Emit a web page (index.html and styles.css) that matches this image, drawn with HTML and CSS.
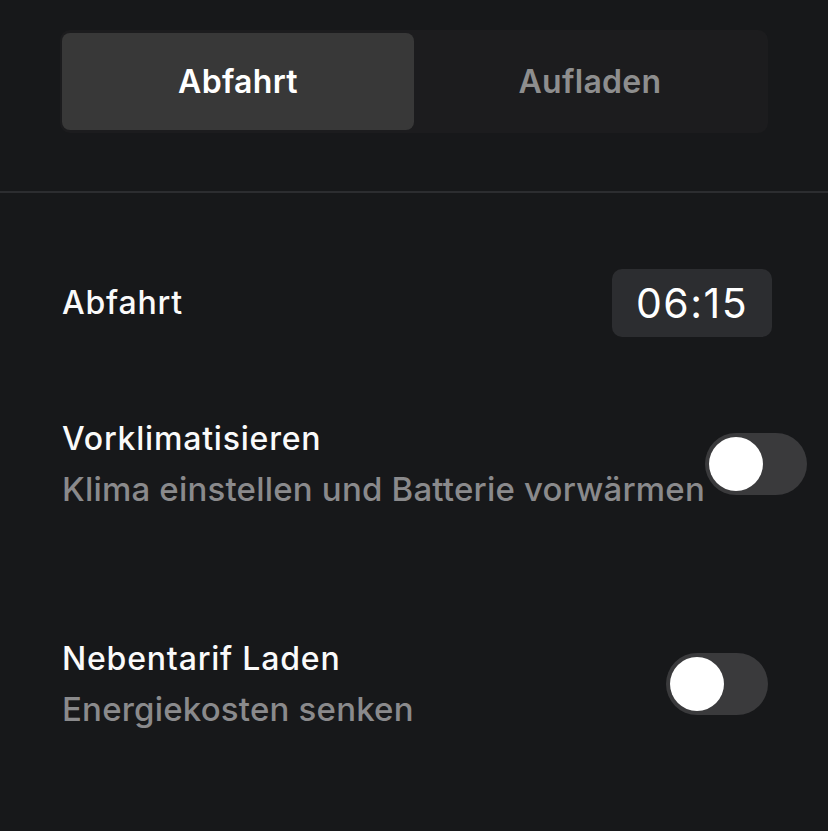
FILE: index.html
```html
<!DOCTYPE html>
<html lang="de">
<head>
  <meta charset="UTF-8" />
  <meta name="viewport" content="width=device-width, initial-scale=1.0"/>
  <title>Abfahrt</title>
  <link rel="stylesheet" href="styles.css">
</head>
<body>

  <div class="tabs">
    <button class="tab active">Abfahrt</button>
    <button class="tab">Aufladen</button>
  </div>

  <hr class="divider">

  <div class="settings">
    <div class="row row-time">
      <div class="label">Abfahrt</div>
      <div class="time-box">06:15</div>
    </div>

    <div class="row row-climate">
      <div class="text">
        <div class="label">Vorklimatisieren</div>
        <div class="sub">Klima einstellen und Batterie vorwärmen</div>
      </div>
      <div class="toggle"><span class="knob"></span></div>
    </div>

    <div class="row row-tariff">
      <div class="text">
        <div class="label">Nebentarif Laden</div>
        <div class="sub">Energiekosten senken</div>
      </div>
      <div class="toggle"><span class="knob"></span></div>
    </div>
  </div>

</body>
</html>
```

FILE: styles.css
```css
body {
  font-family: Inter, 'Noto Sans', sans-serif;
  background: #17181a;
  margin: 0;
  color: #f5f5f5;
  height: 831px;
  overflow: hidden;
}

.tabs {
  display: flex;
  margin: 30px 60px 0 60px;
  padding: 3px 2px;
  background: #1c1c1e;
  border-radius: 10px;
  height: 97px;
}

.tab {
  flex: 1;
  border: none;
  background: transparent;
  border-radius: 8px;
  font-family: inherit;
  font-size: 32px;
  font-weight: 600;
  letter-spacing: 0.3px;
  color: #8e8e8e;
  padding: 0;
}

.tab.active {
  background: #383838;
  color: #fff;
}

.divider {
  border: none;
  height: 2px;
  background: #2c2d30;
  margin: 58px 0 0;
}

.settings {
  padding: 0 60px 0 62px;
}

.row {
  display: flex;
  align-items: center;
  justify-content: space-between;
}

.row-time {
  margin-top: 76px;
}

.row-climate {
  margin-top: 77px;
}

.row-tariff {
  margin-top: 120px;
}

.text {
  flex-shrink: 0;
  white-space: nowrap;
}

.label {
  font-size: 32px;
  font-weight: 500;
  letter-spacing: 0.8px;
  line-height: 50px;
  color: #fafafa;
}

.sub {
  font-size: 33px;
  font-weight: 500;
  letter-spacing: 0.2px;
  line-height: 50px;
  color: #8a8a8c;
}

.time-box {
  background: #2c2d30;
  border-radius: 10px;
  width: 160px;
  height: 68px;
  margin-right: -4px;
  display: flex;
  align-items: center;
  justify-content: center;
  font-size: 41px;
  font-weight: 400;
  letter-spacing: 1.5px;
  color: #fff;
}

.toggle {
  flex-shrink: 0;
  width: 102px;
  height: 62px;
  border-radius: 31px;
  background: #3a3a3c;
  padding: 4px;
  box-sizing: border-box;
}

.knob {
  display: block;
  width: 54px;
  height: 54px;
  border-radius: 50%;
  background: #fff;
}
```
